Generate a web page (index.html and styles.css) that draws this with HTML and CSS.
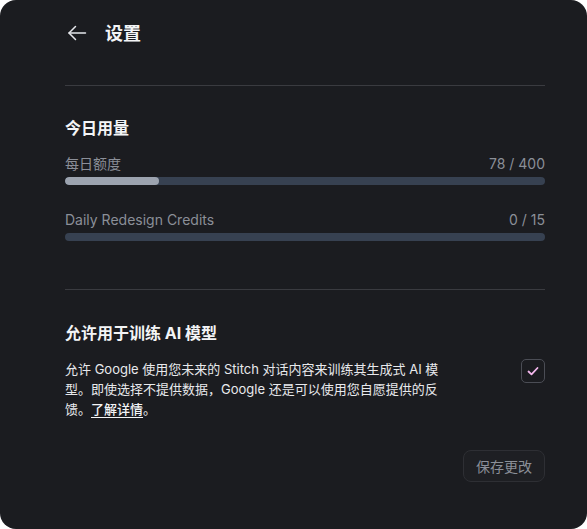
FILE: index.html
```html
<!DOCTYPE html>
<html lang="zh-CN">
    <head>
        <meta charset="utf-8">
        <title>设置</title>
        <link rel="stylesheet" href="styles.css">
    </head>
    <body>
        <section class="panel">
            <header class="header">
                <button class="backButton" aria-label="返回">
                    <svg width="20" height="20" viewBox="0 0 20 20" fill="none" stroke="currentColor" stroke-width="1.5" stroke-linecap="round" stroke-linejoin="round">
                        <path d="M18.5 10H2"/>
                        <path d="M8.5 3.5L2 10l6.5 6.5"/>
                    </svg>
                </button>
                <h1 class="title">设置</h1>
            </header>
            <hr class="divider">

            <div class="section">
                <h2 class="sectionTitle">今日用量</h2>
                <div class="usage">
                    <div class="usageRow">
                        <span>每日额度</span>
                        <span>78 / 400</span>
                    </div>
                    <div class="bar"><div class="barFill" style="width: 19.5%"></div></div>
                </div>
                <div class="usage">
                    <div class="usageRow">
                        <span>Daily Redesign Credits</span>
                        <span>0 / 15</span>
                    </div>
                    <div class="bar"><div class="barFill" style="width: 0%"></div></div>
                </div>
            </div>
            <hr class="divider">

            <div class="section consentSection">
                <h2 class="sectionTitle">允许用于训练 AI 模型</h2>
                <div class="consent">
                    <p class="consentText">允许 Google 使用您未来的 Stitch 对话内容来训练其生成式 AI 模型。即使选择不提供数据，Google 还是可以使用您自愿提供的反馈。<a href="#">了解详情</a>。</p>
                    <label class="checkbox">
                        <svg width="14" height="14" viewBox="0 0 14 14" fill="none" stroke="#f5b8ee" stroke-width="1.8" stroke-linecap="round" stroke-linejoin="round">
                            <path d="M2.5 7.5l3 2.8L11.5 4"/>
                        </svg>
                    </label>
                </div>
            </div>

            <div class="actions">
                <button class="saveButton">保存更改</button>
            </div>
        </section>
    </body>
</html>
```

FILE: styles.css
```css
html, body {
    margin: 0;
    height: 100%;
    background-color: #ffffff;
}

body {
    font-family: Inter, "Noto Sans CJK SC", sans-serif;
    color: #e5e7eb;
}

.panel {
    height: 529px;
    box-sizing: border-box;
    padding: 12px 42px 0 65px;
    background-color: #1b1c20;
    border-radius: 16px;
}

.header {
    display: flex;
    align-items: center;
    gap: 18px;
    height: 42px;
}

.backButton {
    display: flex;
    padding: 0;
    margin-left: 2px;
    margin-top: -1px;
    border: none;
    background: none;
    color: #e5e7eb;
    cursor: pointer;
}

.title {
    margin: 0;
    margin-top: -2px;
    font-size: 18px;
    font-weight: 700;
    color: #f3f4f6;
}

.divider {
    margin: 31px 0 0 0;
    border: none;
    border-top: 1px solid #3a3b40;
}

.section {
    padding-top: 30px;
}

.consentSection {
    padding-top: 31px;
}

.sectionTitle {
    margin: 0 0 14px 0;
    font-size: 16px;
    font-weight: 700;
    line-height: 24px;
    color: #f3f4f6;
}

.usage {
    margin-bottom: 25px;
}

.usage:last-child {
    margin-bottom: 48px;
}

.usageRow {
    display: flex;
    justify-content: space-between;
    font-size: 14px;
    line-height: 20px;
    color: #8b8f98;
    margin-bottom: 3px;
}

.bar {
    height: 8px;
    border-radius: 4px;
    background-color: #374151;
    overflow: hidden;
}

.barFill {
    height: 100%;
    border-radius: 4px;
    background-color: #9ca3af;
}

.consent {
    display: flex;
    justify-content: space-between;
    align-items: flex-start;
    margin-top: 13px;
}

.consentText {
    margin: 0;
    width: 378px;
    font-size: 13px;
    line-height: 20px;
    color: #e8e9ec;
}

.consentText a {
    color: #f3f4f6;
    font-weight: 500;
    text-decoration: underline;
    text-underline-offset: 3px;
}

.checkbox {
    display: flex;
    align-items: center;
    justify-content: center;
    width: 24px;
    height: 24px;
    box-sizing: border-box;
    border: 1px solid #4b4d55;
    border-radius: 5px;
    cursor: pointer;
}

.actions {
    display: flex;
    justify-content: flex-end;
    margin-top: 31px;
}

.saveButton {
    padding: 0 12px;
    height: 32px;
    border: 1px solid #2e2f34;
    border-radius: 8px;
    background-color: #1e1f23;
    font-family: Inter, "Noto Sans CJK SC", sans-serif;
    font-size: 14px;
    color: #8b8f98;
    cursor: pointer;
}
```
